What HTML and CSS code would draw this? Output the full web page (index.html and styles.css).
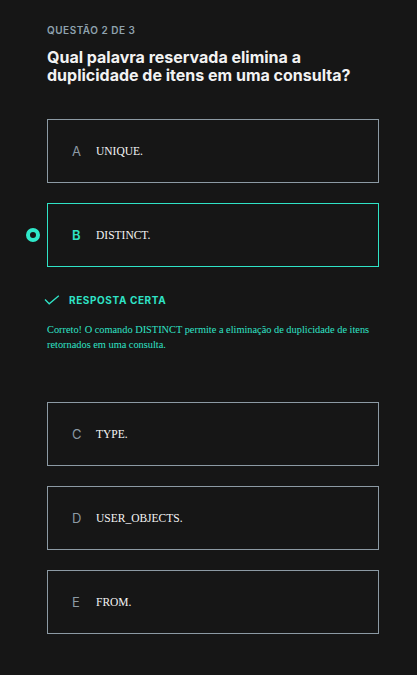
FILE: index.html
```html
<!DOCTYPE html>
<html lang="pt-BR">
<head>
<meta charset="utf-8">
<title>Questão 2 de 3</title>
<link rel="stylesheet" href="styles.css">
</head>
<body>
<main class="quiz">
  <p class="quiz-step">QUESTÃO 2 DE 3</p>
  <h1 class="quiz-title">Qual palavra reservada elimina a duplicidade de itens em uma consulta?</h1>

  <ul class="options">
    <li class="option">
      <span class="option-letter">A</span>
      <span class="option-text">UNIQUE.</span>
    </li>
    <li class="option option--selected">
      <span class="option-radio"></span>
      <span class="option-letter">B</span>
      <span class="option-text">DISTINCT.</span>
    </li>
  </ul>

  <section class="feedback">
    <div class="feedback-head">
      <svg class="feedback-check" width="16" height="10" viewBox="0 0 16 10" aria-hidden="true">
        <path d="M1 4.5 L5.2 8.8 L14.8 0.8" fill="none" stroke="#2fe3c6" stroke-width="1.3"/>
      </svg>
      <span class="feedback-title">RESPOSTA CERTA</span>
    </div>
    <p class="feedback-text">Correto! O comando DISTINCT permite a eliminação de duplicidade de itens retornados em uma consulta.</p>
  </section>

  <ul class="options options--rest">
    <li class="option">
      <span class="option-letter">C</span>
      <span class="option-text">TYPE.</span>
    </li>
    <li class="option">
      <span class="option-letter">D</span>
      <span class="option-text">USER_OBJECTS.</span>
    </li>
    <li class="option">
      <span class="option-letter">E</span>
      <span class="option-text">FROM.</span>
    </li>
  </ul>
</main>
</body>
</html>
```

FILE: styles.css
```css
html, body {
  margin: 0;
  padding: 0;
  background: #161616;
}

body {
  font-family: "Inter", "Liberation Sans", sans-serif;
  color: #ffffff;
}

.quiz {
  padding: 23px 38px 40px 47px;
}

.quiz-step {
  margin: 0;
  font-size: 10px;
  line-height: 14px;
  font-weight: 600;
  letter-spacing: 0.5px;
  color: #8fa2ae;
}

.quiz-title {
  margin: 11px 0 0;
  font-size: 16px;
  line-height: 18px;
  font-weight: 700;
  color: #f2f2f2;
}

.options {
  list-style: none;
  margin: 35px 0 0;
  padding: 0;
  display: flex;
  flex-direction: column;
  gap: 20px;
}

.options--rest {
  margin-top: 0;
}

.option {
  position: relative;
  box-sizing: border-box;
  height: 64px;
  border: 1px solid #8c9aa4;
  display: flex;
  align-items: center;
  padding-left: 24px;
}

.option--selected {
  border-color: #2fe3c6;
}

.option-letter {
  width: 8px;
  margin-right: 16px;
  font-size: 13px;
  color: #8c9aa4;
}

.option--selected .option-letter {
  color: #2fe3c6;
  font-weight: 600;
}

.option-text {
  font-family: "Liberation Serif", "Times New Roman", serif;
  font-size: 11.5px;
  color: #f4f4f4;
}

.option-radio {
  position: absolute;
  left: -22px;
  top: 50%;
  margin-top: -7px;
  width: 14px;
  height: 14px;
  box-sizing: border-box;
  border-radius: 50%;
  border: 4.5px solid #2fe8c9;
}

.feedback {
  padding: 27px 0 0;
  height: 135px;
  box-sizing: border-box;
}

.feedback-head {
  display: flex;
  align-items: center;
  gap: 9px;
  margin-left: -3px;
}

.feedback-title {
  font-size: 10px;
  font-weight: 700;
  letter-spacing: 0.6px;
  color: #2fe3c6;
}

.feedback-text {
  margin: 16px 0 0;
  font-family: "Liberation Serif", "Times New Roman", serif;
  font-size: 10.35px;
  line-height: 15px;
  color: #2fe3c6;
}
```
